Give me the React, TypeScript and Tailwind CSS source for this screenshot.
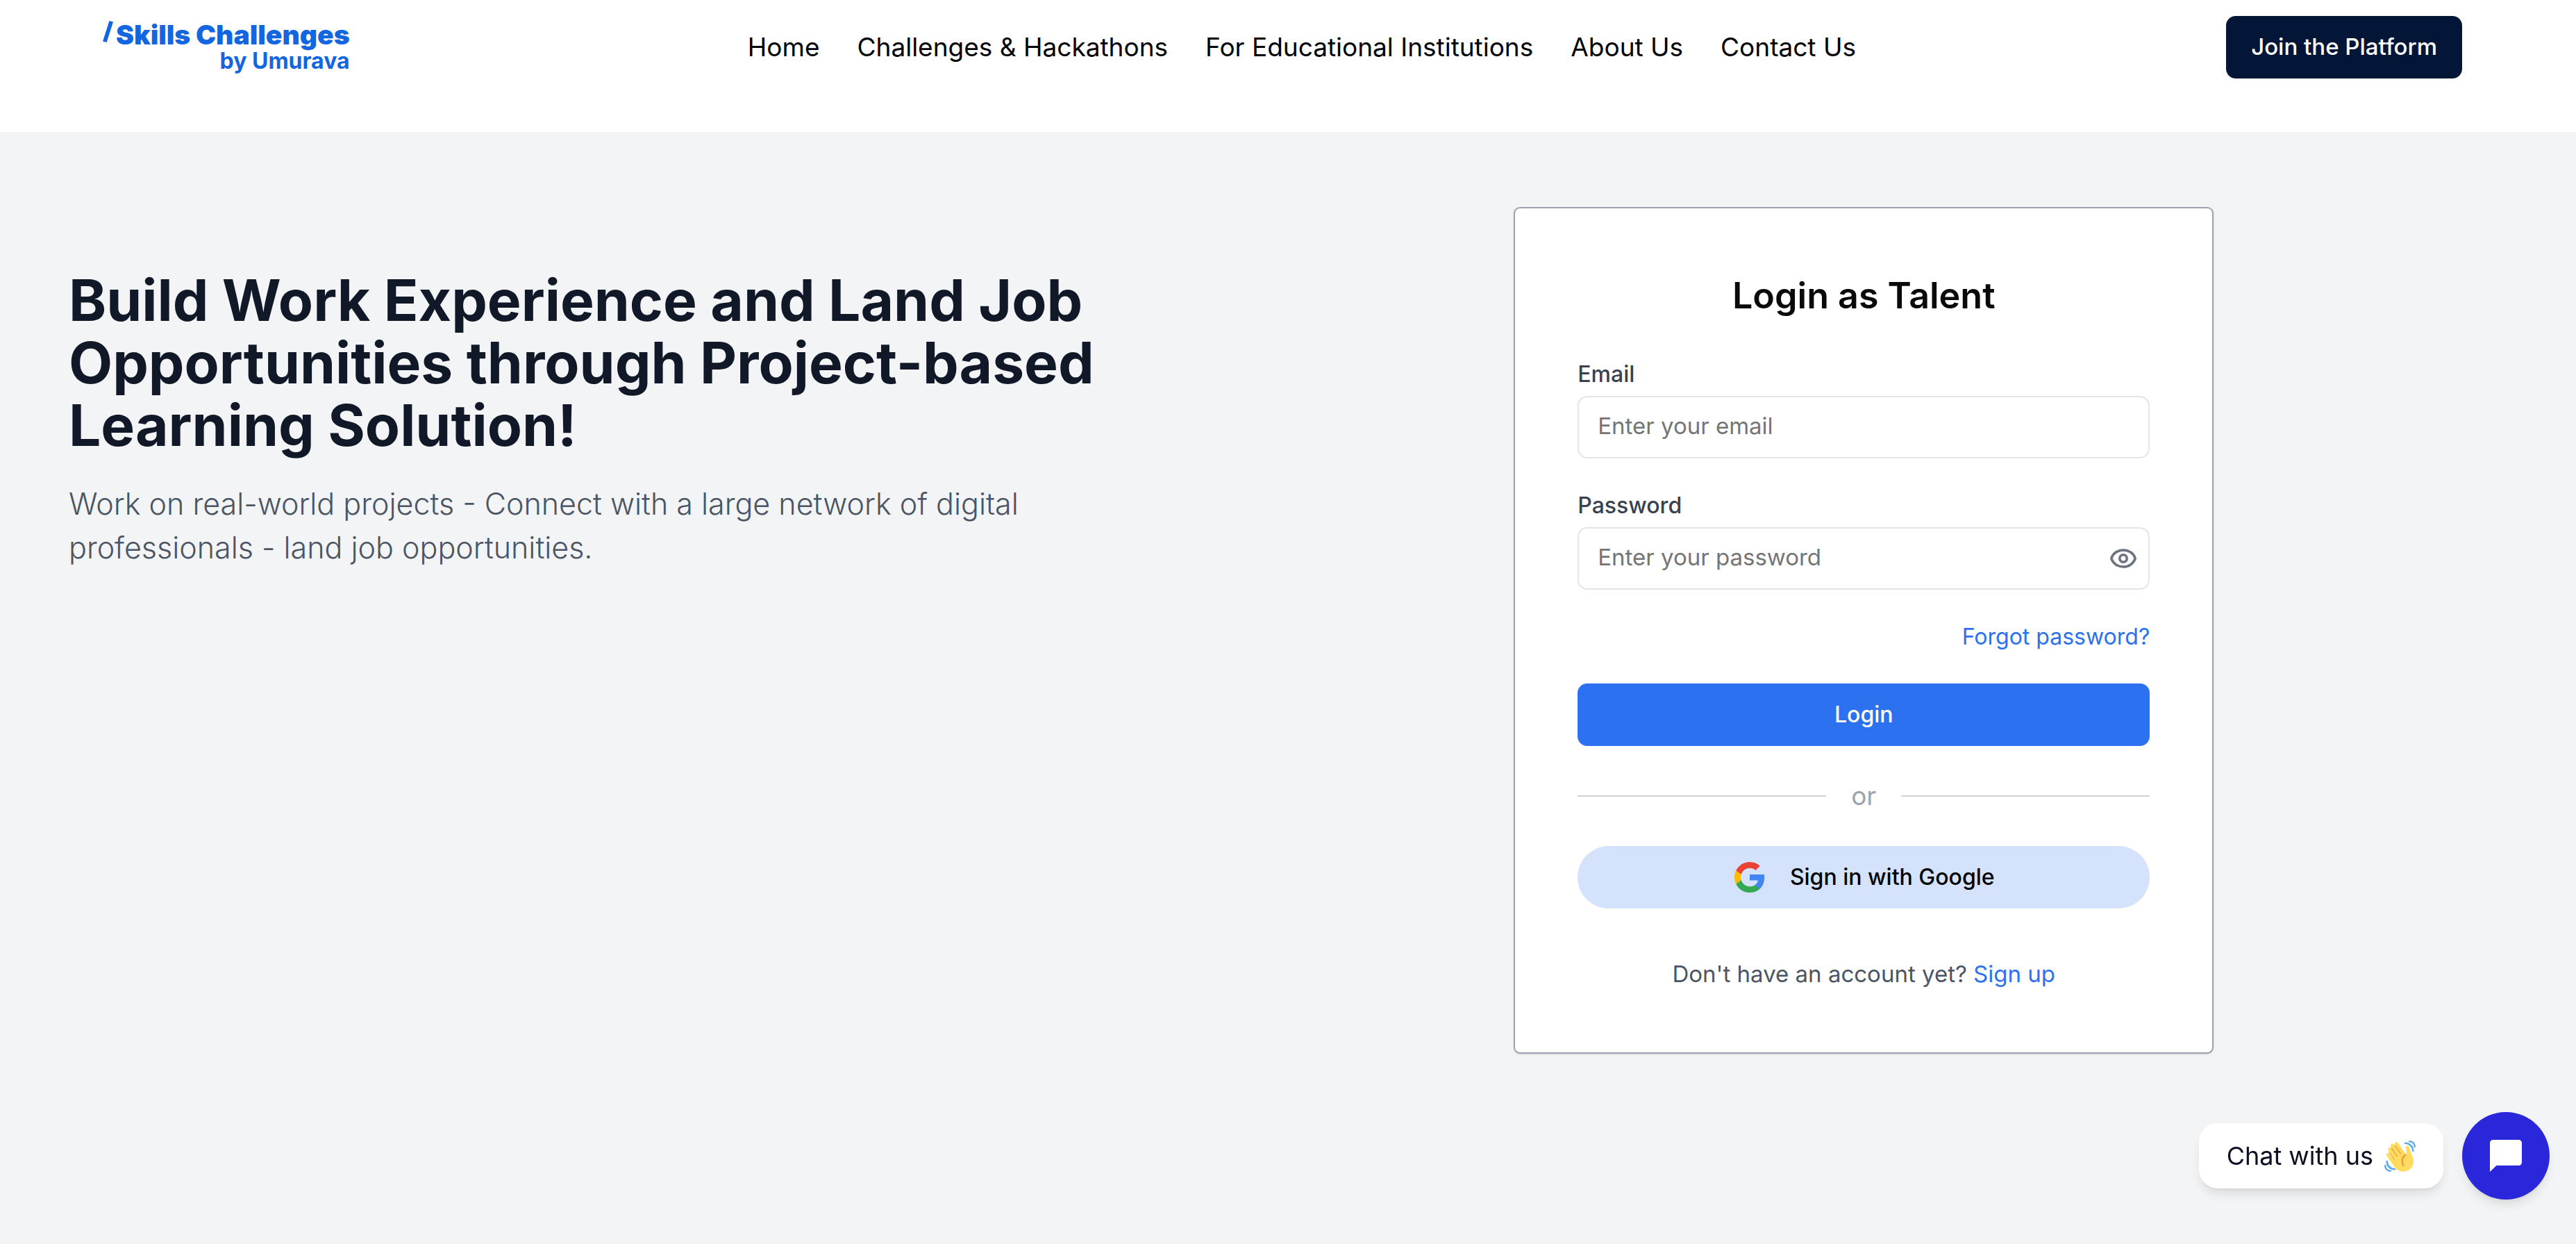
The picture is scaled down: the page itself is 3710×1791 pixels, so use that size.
import { useState, type ReactNode } from "react";

const NAV_LINKS = [
  "Home",
  "Challenges & Hackathons",
  "For Educational Institutions",
  "About Us",
  "Contact Us",
];

function Logo() {
  return (
    <a href="#home" className="flex items-start font-bold text-[#1266e0]">
      <svg viewBox="0 0 15 31" className="h-[31px] w-[15px]" aria-hidden="true">
        <path d="M9.5 0 15 1.5 5.6 31 0 29.4Z" fill="currentColor" />
      </svg>
      <span className="flex flex-col items-end pl-1">
        <span className="text-[39px] leading-10 font-black">Skills Challenges</span>
        <span className="text-[32px] leading-9">by Umurava</span>
      </span>
    </a>
  );
}

function Header() {
  return (
    <header className="flex h-[190px] items-start justify-between bg-white pt-[23px] pr-[164px] pl-[148px]">
      <div className="pt-[7px] pr-10">
        <Logo />
      </div>
      <nav className="flex h-[90px] items-center gap-[54px] text-[37px] text-black">
        {NAV_LINKS.map((label) => (
          <a key={label} href="#home">
            {label}
          </a>
        ))}
      </nav>
      <button
        type="button"
        className="h-[90px] rounded-[14px] bg-[#041638] px-9 text-[33px] font-medium text-white"
      >
        Join the Platform
      </button>
    </header>
  );
}

function Hero() {
  return (
    <section className="pt-[90px]">
      <h1 className="text-[82px] leading-[90px] font-bold text-[#111827]">
        Build Work Experience and Land Job
        <br />
        Opportunities through Project-based
        <br />
        Learning Solution!
      </h1>
      <p className="pt-9 text-[43px] leading-[63px] font-light text-[#4b5563]">
        Work on real-world projects - Connect with a large network of digital
        <br />
        professionals - land job opportunities.
      </p>
    </section>
  );
}

interface FieldProps {
  id: string;
  label: string;
  type: string;
  placeholder: string;
  children?: ReactNode;
}

function Field({ id, label, type, placeholder, children }: FieldProps) {
  return (
    <div className="flex flex-col gap-[9px]">
      <label htmlFor={id} className="text-[32px] leading-[45px] font-medium text-[#374151]">
        {label}
      </label>
      <div className="flex h-[90px] items-center rounded-[14px] border-2 border-[#e5e5e5] pr-4">
        <input
          id={id}
          type={type}
          placeholder={placeholder}
          className="h-full min-w-0 flex-1 bg-transparent pb-1 pl-[27px] text-[33px] text-gray-900 outline-none placeholder:text-[#757575]"
        />
        {children}
      </div>
    </div>
  );
}

function EyeIcon() {
  return (
    <svg viewBox="0 0 40 30" className="h-[30px] w-10" fill="none" stroke="currentColor" strokeWidth="3.6" aria-hidden="true">
      <path
        d="M3 15.700a2 2 0 0 1 0-1.400C5.500 7.500 12 3 20 3S34.500 7.500 37 14.300a2 2 0 0 1 0 1.400C34.500 22.500 28 27 20 27S5.500 22.500 3 15.700Z"
        strokeLinejoin="round"
      />
      <circle cx="20" cy="15" r="5.2" />
    </svg>
  );
}

function GoogleIcon() {
  return (
    <svg viewBox="0 0 24 24" className="size-12" aria-hidden="true">
      <path fill="#4285F4" d="M22.56 12.25c0-.78-.07-1.53-.2-2.25H12v4.26h5.92c-.26 1.37-1.04 2.53-2.21 3.31v2.77h3.57c2.08-1.92 3.28-4.74 3.28-8.09z" />
      <path fill="#34A853" d="M12 23c2.97 0 5.46-.98 7.28-2.66l-3.57-2.77c-.98.66-2.23 1.06-3.71 1.06-2.86 0-5.29-1.93-6.16-4.53H2.18v2.84C3.99 20.53 7.7 23 12 23z" />
      <path fill="#FBBC05" d="M5.84 14.09c-.22-.66-.35-1.36-.35-2.09s.13-1.43.35-2.09V7.07H2.18C1.43 8.55 1 10.22 1 12s.43 3.45 1.18 4.93l3.66-2.84z" />
      <path fill="#EA4335" d="M12 5.38c1.62 0 3.06.56 4.21 1.64l3.15-3.15C17.45 2.09 14.97 1 12 1 7.7 1 3.99 3.47 2.18 7.07l3.66 2.84c.87-2.6 3.3-4.53 6.16-4.53z" />
    </svg>
  );
}

function LoginCard() {
  const [shown, setShown] = useState(false);
  return (
    <form
      onSubmit={(event) => event.preventDefault()}
      className="flex w-full max-w-[1008px] flex-col rounded-[9px] border-2 border-[#9ca3af] bg-white p-[90px] shadow-sm"
    >
      <h2 className="text-center text-[52px] leading-[72px] font-semibold text-neutral-950">
        Login as Talent
      </h2>
      <div className="flex flex-col gap-[45px] pt-[54px]">
        <Field id="email" label="Email" type="email" placeholder="Enter your email" />
        <Field
          id="password"
          label="Password"
          type={shown ? "text" : "password"}
          placeholder="Enter your password"
        >
          <button type="button" aria-label="Show password" onClick={() => setShown(!shown)} className="text-[#6b7280]">
            <EyeIcon />
          </button>
        </Field>
      </div>
      <a href="#forgot" className="mt-[45px] self-end text-[32px] leading-[45px] text-[#2b71f0]">
        Forgot password?
      </a>
      <button
        type="submit"
        className="mt-[45px] h-[90px] rounded-[14px] bg-[#2b71f0] text-[32px] font-medium text-white"
      >
        Login
      </button>
      <div className="flex items-center gap-9 pt-[45px]">
        <hr className="flex-1 border-t-2 border-[#d1d1db]" />
        <span className="text-[37px] leading-[54px] text-[#9ca3af]">or</span>
        <hr className="flex-1 border-t-2 border-[#d1d1db]" />
      </div>
      <button
        type="button"
        className="mt-[45px] flex h-[90px] items-center justify-center gap-[34px] rounded-full bg-[#d5e2fc] text-[32px] font-medium text-black"
      >
        <GoogleIcon />
        Sign in with Google
      </button>
      <p className="pt-[72px] text-center text-[33px] leading-[45px] text-[#4b5563]">
        Don't have an account yet?{" "}
        <a href="#signup" className="text-[#2b71f0]">
          Sign up
        </a>
      </p>
    </form>
  );
}

function WaveIcon() {
  return (
    <svg viewBox="0 0 36 36" className="size-[45px]" aria-hidden="true">
      <path fill="#EF9645" d="M5.600 13.600 5.500 12.300 8 9.300 7.900 7.600 11 5.400 12 5 25 16 23 30 12 24Z" />
      <path
        fill="#FFDC5D"
        d="M2.695 17.336s-1.132-1.650.519-2.781c1.649-1.131 2.780.518 2.780.518l5.251 7.658c.181-.302.379-.600.600-.894L4.557 11.210s-1.131-1.649.519-2.780c1.649-1.131 2.780.518 2.780.518l6.855 9.997c.255-.208.516-.417.785-.622L7.549 6.732s-1.131-1.649.519-2.780c1.649-1.131 2.780.518 2.780.518l7.947 11.589c.292-.179.581-.334.871-.498L12.238 4.729s-1.131-1.649.518-2.780c1.649-1.131 2.780.518 2.780.518l7.854 11.454 1.194 1.742c-4.948 3.394-5.419 9.779-2.592 13.902.565.825 1.390.260 1.390.260-3.393-4.949-2.357-10.510 2.592-13.903L24.515 8.620s-.545-1.924 1.378-2.470c1.924-.545 2.470 1.379 2.470 1.379l1.685 5.004c.668 1.984 1.379 3.961 2.320 5.831 2.657 5.280 1.070 11.842-3.940 15.279-5.465 3.747-12.936 2.354-16.684-3.110L2.695 17.336z"
      />
      <path
        fill="#5DADEC"
        d="M12 32.042C8 32.042 3.958 28 3.958 24c0-.553-.405-1-.958-1s-1.042.447-1.042 1C1.958 30 6 34.042 12 34.042c.553 0 1-.489 1-1.042s-.447-.958-1-.958zM7 34c-3 0-5-2-5-5 0-.553-.447-1-1-1s-1 .447-1 1c0 4 3 7 7 7 .553 0 1-.447 1-1s-.447-1-1-1zM24 2c-.552 0-1 .448-1 1s.448 1 1 1c4 0 8 3.589 8 8 0 .552.448 1 1 1s1-.448 1-1c0-5.514-4-10-10-10zM29 .042c-.552 0-1 .406-1 .958s.448 1.042 1 1.042c3 0 4.958 2.225 4.958 4.958 0 .552.489 1 1.042 1s.958-.448.958-1C35.958 3.163 33 .042 29 .042z"
      />
      <path
        d="M24.600 15.700c-5 3.400-5.800 9-2.500 13.800"
        fill="none"
        stroke="#EF9645"
        strokeWidth="1"
        strokeLinecap="round"
      />
    </svg>
  );
}

function ChatWidget() {
  return (
    <aside className="fixed right-[38px] bottom-16 flex items-center gap-[27px]">
      <button
        type="button"
        className="flex h-[94px] items-center gap-4 rounded-[27px] bg-white px-10 text-[36px] text-[#0b1020] shadow-lg"
      >
        Chat with us
        <WaveIcon />
      </button>
      <button
        type="button"
        aria-label="Open chat"
        className="flex size-[126px] items-center justify-center rounded-full bg-[#2a27da] text-white shadow-lg"
      >
        <svg viewBox="0 0 46 46" className="size-[46px]" aria-hidden="true">
          <path d="M4.500 0h37a4.500 4.500 0 0 1 4.500 4.500v28a4.500 4.500 0 0 1-4.500 4.500H9.500L0 46V4.500A4.500 4.500 0 0 1 4.500 0Z" fill="currentColor" />
        </svg>
      </button>
    </aside>
  );
}

export default function App() {
  return (
    <div className="flex min-h-screen flex-col bg-[#f3f4f6] font-['Inter',sans-serif]">
      <Header />
      <main className="grid flex-1 grid-cols-2 items-start pt-[108px] pr-[164px] pl-[99px]">
        <Hero />
        <div className="flex justify-center">
          <LoginCard />
        </div>
      </main>
      <ChatWidget />
    </div>
  );
}
